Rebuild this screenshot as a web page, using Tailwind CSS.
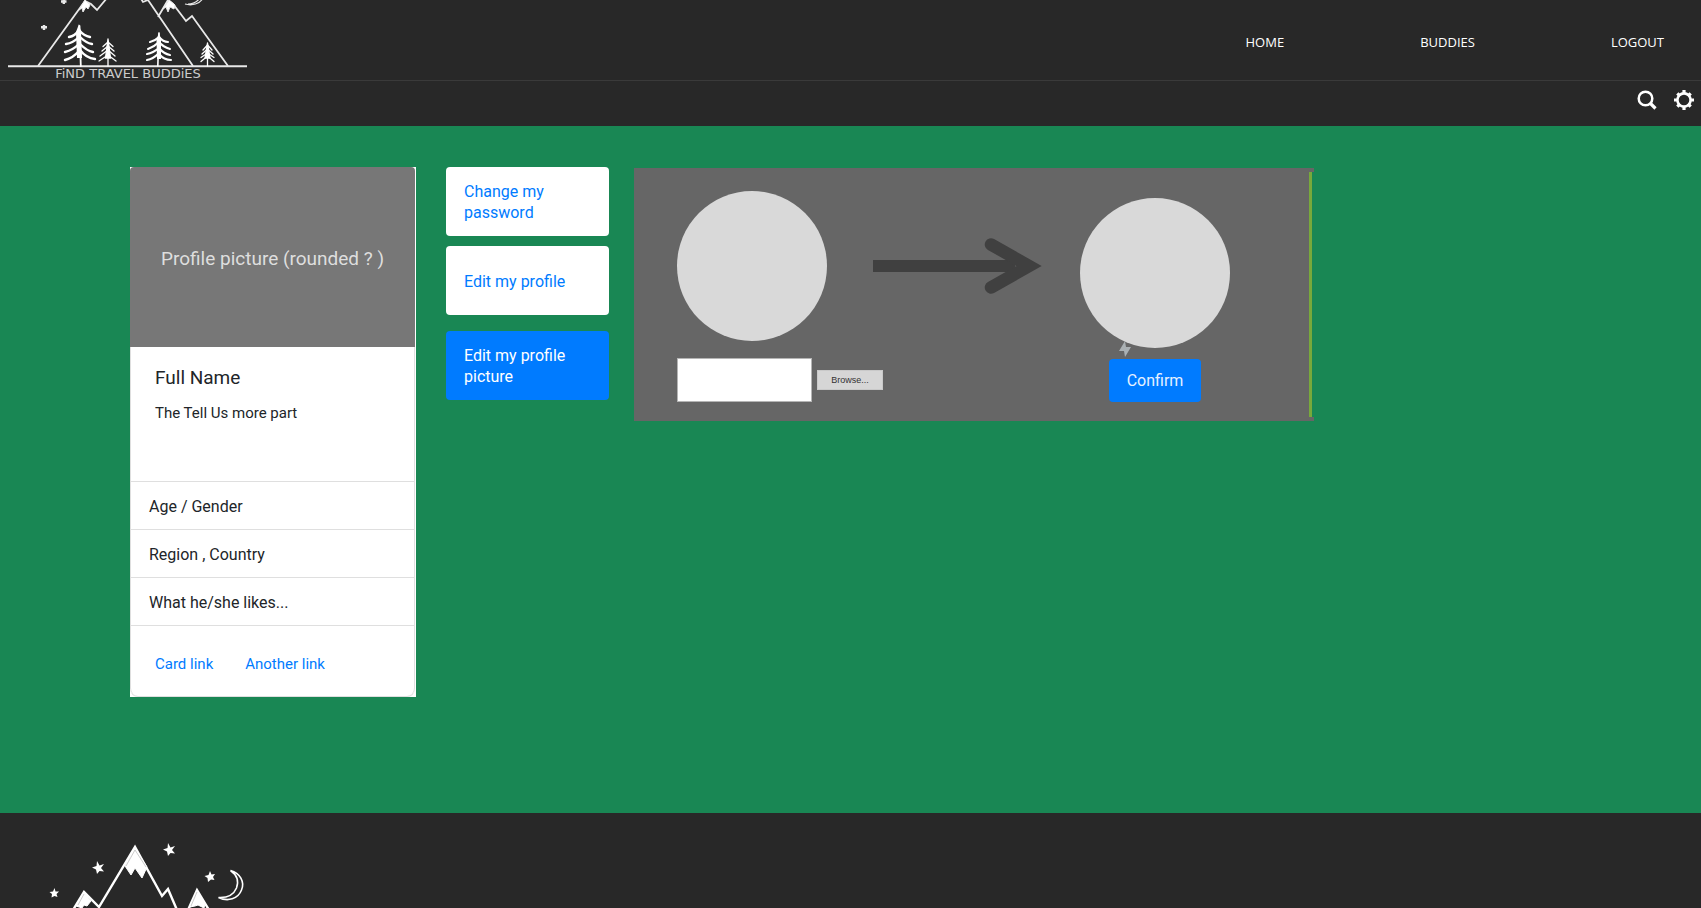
<!DOCTYPE html>
<html lang="en">
<head>
<meta charset="utf-8">
<meta name="viewport" content="width=device-width, initial-scale=1">
<title>Find Travel Buddies</title>
<script src="https://cdn.jsdelivr.net/npm/@tailwindcss/browser@4"></script>
</head>
<body class="bg-[#282828] font-['Roboto',sans-serif] text-base text-[#212529]">
<header class="bg-[#282828] text-white">
  <div class="flex h-[81px] items-center justify-between border-b border-[#3a3a3a] pr-[37px]">
    <a href="#" aria-label="Find Travel Buddies" class="self-start">
      <svg width="260" height="80" viewBox="0 0 260 80" fill="none" stroke="#e8e8e8" stroke-width="1.800">
        <path d="M8 66.300H247" stroke-width="1.900"/>
        <path d="M38 66 85 1 91 4 97 10 107-2M140-3 143 2 148 0 193 66M158 17 168 0 173 4 186 21 192 16 228 66"/>
        <path d="M85 0 79 10 82 8 83 12 86 7 88 9 90 5zM169 0 163 9 166 7 168 12 170 7 174 9 175 5z" fill="#fff" stroke-width="1"/>
        <path d="M185 4c7 2 15 0 18-6M188 4c6 0 9-2 12-6" stroke-width="1.200"/>
        <path d="M61 1.500h5.500M63.800-1v5M41 27.300h6M44 25v5" stroke-width="2.400"/>
        <g stroke="#fff" stroke-linecap="round">
          <path d="M79 24 76 32 77 58H82L81 32z" fill="#fff" stroke="none"/>
          <path d="M79.500 26 80.800 66" stroke-width="1.800"/>
          <path d="M79 30Q75 36 69 37M79 30Q84 36 90 37M79 37Q73 43 66 44M80 37Q86 43 92 44M79 44Q73 50 65 52M80 44Q87 51 93 52M79 51Q73 58 65 60M80 50Q86 58 95 59" stroke-width="2.400"/>
        </g>
        <g stroke="#fff" stroke-linecap="round">
          <path d="M159 32 156.500 40 157 59H161L161 40z" fill="#fff" stroke="none"/>
          <path d="M159 33 157.800 66" stroke-width="1.600"/>
          <path d="M159 37Q155 41 150 42M159 37Q163 42 168 42M159 42Q154 47 148 49M159 42Q163 47 170 49M159 48Q153 53 147 54M159 48Q164 54 170 55M158 54Q153 59 147 60M159 54Q164 60 171 60" stroke-width="2.100"/>
        </g>
        <g stroke="#fff" stroke-linecap="round" stroke-width="1.300">
          <path d="M108 39V66M108 39 105.500 58H110.500z" fill="#fff"/>
          <path d="M108 42 103 46.500M108 42 113 46.500M108 46 102 51M108 46 114 51M108 50 100 56M108 50 115 56M108 55 99 61M108 55 116 61"/>
          <path d="M207.500 43V66M207.500 43 205 58H210z" fill="#fff"/>
          <path d="M207.500 45 203 50M207.500 45 212 50M207.500 49 202 54M207.500 49 213 54M207.500 53 201 57.500M207.500 53 214 57.500M207.500 56 201 61.500M207.500 56 214 61.500"/>
        </g>
        <text x="128" y="78" text-anchor="middle" fill="#ccc" stroke="none" class="font-['DejaVu_Sans',sans-serif] text-[13px]">FiND TRAVEL BUDDiES</text>
      </svg>
    </a>
    <nav class="flex gap-[136px] pt-1 font-['Open_Sans',sans-serif] text-[13px] leading-5">
      <a href="#">HOME</a><a href="#">BUDDIES</a><a href="#">LOGOUT</a>
    </nav>
  </div>
  <div class="flex h-[45px] items-start justify-end gap-4 pt-2 pr-[7px]">
    <button aria-label="Search" class="flex h-[22px] w-[22px] items-center justify-center">
      <svg width="22" height="22" viewBox="0 0 22 22" fill="none" stroke="#fff"><circle cx="9.500" cy="9.500" r="6.800" stroke-width="2.500"/><path d="m14 14 5.500 5.500" stroke-width="3.200"/></svg>
    </button>
    <button aria-label="Settings" class="flex h-[22px] w-[20px] items-center justify-center">
      <svg width="20" height="22" viewBox="0 0 20 22" fill="none" stroke="#fff"><circle cx="10" cy="11" r="6.600" stroke-width="2.600"/><path d="M10 1v4M10 17v4M0 11h4M16 11h4M3.300 4.300 6 7M14 15l2.700 2.700M3.300 17.700 6 15M14 7l2.700-2.700" stroke-width="3.200"/></svg>
    </button>
  </div>
</header>

<main class="flex min-h-[687px] items-start bg-[#198754] pt-[41px] pl-[130px]">
  <article class="w-[286px] shrink-0 bg-white pr-px">
    <div class="rounded-b-lg border-b border-[#dfdfdf]">
      <div class="flex h-[180px] items-center justify-center rounded-t bg-[#777] pt-1 text-[19px] text-[#dedede]">Profile picture (rounded ? )</div>
      <div class="rounded-b-lg border-x border-[#dfdfdf]">
        <div class="h-[134px] px-6 pt-[19px]">
          <h1 class="text-[19px] leading-6">Full Name</h1>
          <p class="mt-[11px] text-[15px] leading-6">The Tell Us more part</p>
        </div>
        <ul class="leading-6">
          <li class="flex h-12 items-center border-t border-[#dfdfdf] px-[18px] pt-0.5">Age / Gender</li>
          <li class="flex h-12 items-center border-t border-[#dfdfdf] px-[18px] pt-0.5">Region , Country</li>
          <li class="flex h-12 items-center border-t border-[#dfdfdf] px-[18px] pt-0.5">What he/she likes...</li>
        </ul>
        <div class="flex h-[71px] items-center gap-8 border-t border-[#dfdfdf] px-6 pt-[6px] text-[15px] leading-6 text-[#007bff]">
          <a href="#">Card link</a><a href="#">Another link</a>
        </div>
      </div>
    </div>
  </article>

  <nav class="ml-[30px] flex w-[163px] shrink-0 flex-col leading-[21px] text-[#007bff]">
    <a href="#" class="flex h-[69px] items-center rounded bg-white pr-8 pl-[18px]">Change my password</a>
    <a href="#" class="mt-[10px] flex h-[69px] items-center rounded bg-white pt-0.5 pr-8 pl-[18px]">Edit my profile</a>
    <a href="#" aria-current="page" class="mt-4 flex h-[69px] items-center rounded bg-[#007bff] pr-8 pl-[18px] text-white">Edit my profile picture</a>
  </nav>

  <section aria-label="Edit my profile picture" class="mt-px ml-[25px] flex h-[253px] w-[680px] shrink-0 bg-[#666]">
    <div class="flex w-[206px] shrink-0 flex-col pt-[23px] pl-[43px]">
      <div class="h-[150px] w-[150px] rounded-full bg-[#d9d9d9]"></div>
      <div class="mt-[17px] flex items-center gap-[5px]">
        <input type="text" aria-label="Picture file" class="h-11 w-[135px] shrink-0 border border-[#b5b5b5] bg-white px-2 text-sm">
        <button class="flex h-5 w-[66px] shrink-0 items-center justify-center border border-[#c9c9c9] bg-[#d6d6d6] pt-0.5 font-['Liberation_Sans',sans-serif] text-[9px] text-[#333]">Browse...</button>
      </div>
    </div>
    <svg class="mt-[68px] ml-[33px] shrink-0" width="170" height="60" viewBox="0 0 170 60" fill="none" stroke="#404040"><path d="M0 30H142" stroke-width="12"/><path d="M118 8.500 156 30 118 51.500" stroke-width="12.500" stroke-linecap="round"/></svg>
    <div class="relative ml-[37px] flex w-[151px] shrink-0 flex-col pt-[30px]">
      <div class="h-[150px] w-[150px] rounded-full bg-[#d9d9d9]"></div>
      <svg class="absolute top-[172px] left-[38px]" width="14" height="18" viewBox="0 0 14 18" fill="#aab0b3"><path d="M7 1 8 7 13 7 7 17 6 11 1 11z"/></svg>
      <button class="mt-[11px] ml-[29px] h-[43px] w-[92px] rounded bg-[#007bff] text-base text-[#e6f1ff]">Confirm</button>
    </div>
    <div class="my-1 ml-auto w-[5px] shrink-0 border-r-2 border-l-3 border-r-[#198754] border-l-[#78a93b]"></div>
  </section>
</main>

<footer class="h-[95px] overflow-hidden bg-[#282828]">
  <svg width="280" height="95" viewBox="0 13 280 95" fill="none" stroke="#fff" stroke-width="2.400">
    <path d="M73 110 84 92 99 107 135 47 162 96 168 89 177 110M188 110 197 90 209 110"/>
    <path d="M135 48 125 66 131 75 135 68 142 78 147 67zM84 92 76 106 82 108 84 105 87 106 91 101zM197 91 190 107 195 106 198 105 204 108 205 104z" fill="#fff" stroke-width="1"/>
    <path d="M135 50 126 66M135 50 146 67M84 94 78 105M197 92 191 106" stroke="#aaa" stroke-width=".6"/>
    <g fill="#fff" stroke="none">
      <path id="star" d="M168 43 170.500 47.500 175 46 172 50 175 53.500 170.500 53 168 56 167 51.500 163 49.500 167.500 48z"/>
      <use href="#star" x="-71" y="18"/>
      <path d="M210 71 211.500 74.500 215 74 213 77 214.500 80 211 79.500 208 82 207.500 78 204.500 76 208.500 75z"/>
      <path d="M54.500 88 55.500 91.500 59 91.500 56.500 94 57.500 97 54.500 96 51.500 97.500 52 94 49.500 92 53 91.500z"/>
    </g>
    <path d="M230.500 70.500C240 73 245 82 241.500 90 238 99 228 102 218.500 97.500 228 98 234 94 236.500 88 239 81 237 75 230.500 70.500z" stroke-width="1.600"/>
  </svg>
</footer>
</body>
</html>
